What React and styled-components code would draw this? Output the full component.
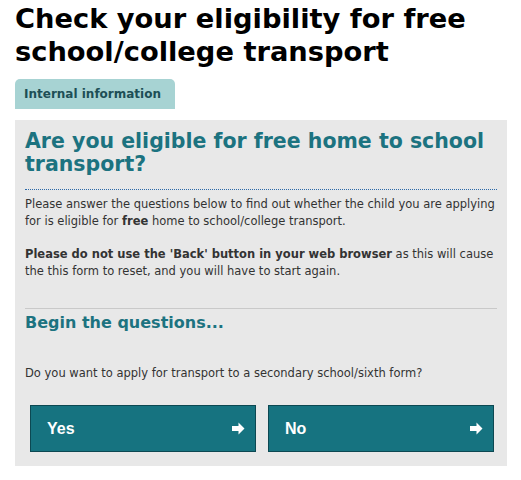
import styled, { createGlobalStyle } from 'styled-components';

const GlobalStyle = createGlobalStyle`
  body {
    margin: 0;
    background: #ffffff;
    font-family: 'DejaVu Sans', Verdana, sans-serif;
  }
`;

const Page = styled.div`
  width: 492px;
  padding: 0 14px 0 15px;
`;

const Title = styled.h1`
  margin: 0;
  padding-top: 2px;
  font-family: 'DejaVu Sans', Verdana, sans-serif;
  font-size: 27.3px;
  line-height: 33px;
  font-weight: bold;
  color: #000;
`;

const Tab = styled.div`
  display: inline-block;
  margin-top: 11px;
  padding: 0 14px 0 9px;
  height: 30px;
  line-height: 30px;
  background: #a7d3d3;
  border-radius: 5px 5px 0 0;
  font-size: 12px;
  font-weight: bold;
  color: #1d4f56;
`;

const Panel = styled.div`
  margin-top: 11px;
  background: #e8e8e8;
  padding: 10px 10px 14px 10px;
`;

const Heading = styled.h2`
  margin: 0;
  padding-bottom: 13px;
  border-bottom: 1px dotted #2a68a8;
  font-size: 20.5px;
  line-height: 23px;
  font-weight: bold;
  color: #1c7380;
`;

const Para = styled.p`
  margin: 6px 0 0 0;
  font-size: 11.5px;
  line-height: 17px;
  color: #333;

  & + & {
    margin-top: 16px;
  }

  strong {
    font-weight: bold;
  }
`;

const Rule = styled.hr`
  margin: 28px 0 0 0;
  border: 0;
  border-top: 1px solid #c9c9c9;
`;

const SubHeading = styled.h3`
  margin: 3px 0 0 0;
  font-size: 16px;
  line-height: 22px;
  font-weight: bold;
  color: #1c7380;
`;

const Question = styled.p`
  margin: 31px 0 0 0;
  font-size: 11.5px;
  line-height: 17px;
  color: #333;
`;

const Buttons = styled.div`
  display: grid;
  grid-template-columns: 1fr 1fr;
  gap: 12px;
  margin: 23px 3px 0 5px;
`;

const Choice = styled.button`
  display: flex;
  align-items: center;
  justify-content: space-between;
  height: 47px;
  padding: 0 10px 0 16px;
  background: #167380;
  border: 1px solid #0c4852;
  color: #fff;
  font-family: 'Liberation Sans', Arial, sans-serif;
  font-size: 16px;
  font-weight: bold;
  cursor: pointer;
`;

const Arrow = () => (
  <svg width="13" height="13" viewBox="0 0 13 13" aria-hidden="true">
    <path d="M0 4h6.5V0.5L12.5 6.5L6.5 12.5V9H0z" fill="#fff" />
  </svg>
);

export default function App() {
  return (
    <Page>
      <GlobalStyle />
      <Title>Check your eligibility for free school/college transport</Title>
      <Tab>Internal information</Tab>
      <Panel>
        <Heading>Are you eligible for free home to school transport?</Heading>
        <Para>
          Please answer the questions below to find out whether the child you are applying
          for is eligible for <strong>free</strong> home to school/college transport.
        </Para>
        <Para>
          <strong>Please do not use the 'Back' button in your web browser</strong> as this will
          cause the this form to reset, and you will have to start again.
        </Para>
        <Rule />
        <SubHeading>Begin the questions...</SubHeading>
        <Question>Do you want to apply for transport to a secondary school/sixth form?</Question>
        <Buttons>
          <Choice type="button">
            Yes
            <Arrow />
          </Choice>
          <Choice type="button">
            No
            <Arrow />
          </Choice>
        </Buttons>
      </Panel>
    </Page>
  );
}
